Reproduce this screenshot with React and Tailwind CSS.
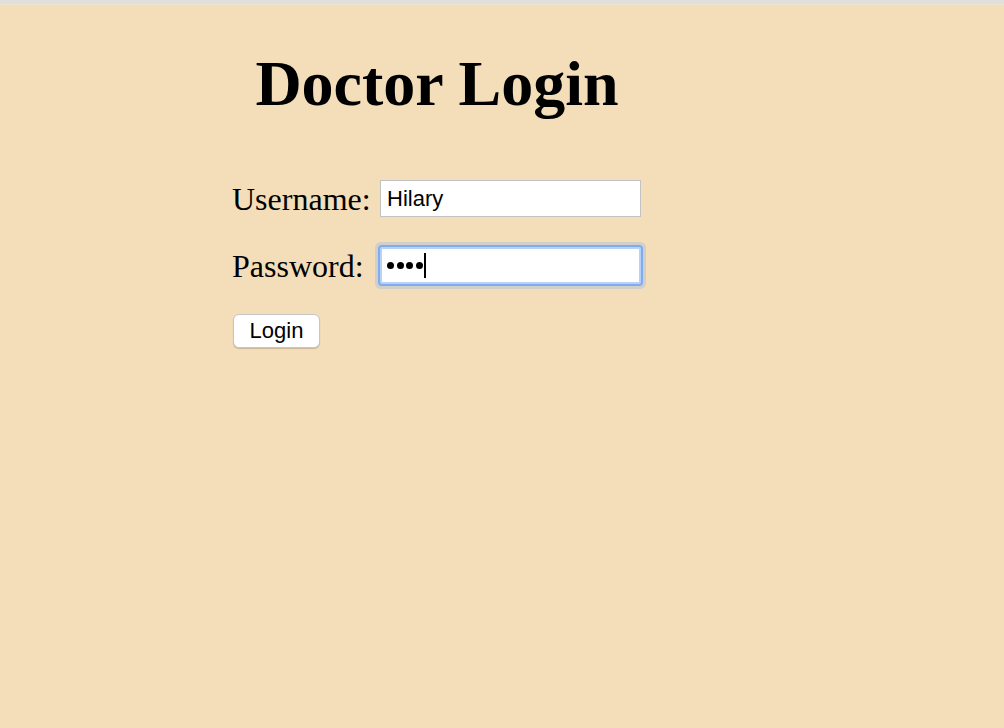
export default function App() {
  return (
    <div className="min-h-screen bg-[#f3deb9] font-['Liberation_Serif',serif] text-black">
      {/* browser chrome edge */}
      <div className="h-[4px] bg-[#e1dfdc]" />
      <div className="h-[1px] bg-[#ece3d2]" />

      <div className="ml-[232px] w-[410px] pt-[47px]">
        <h1 className="text-center text-[64px] font-bold leading-none">Doctor Login</h1>

        <form className="mt-[64px]" onSubmit={(e) => e.preventDefault()}>
          <div className="grid grid-cols-[148px_261px] items-center gap-y-[30px]">
            <label className="text-[32px] leading-none">Username:</label>
            <input
              type="text"
              defaultValue="Hilary"
              className="h-[37px] w-[261px] border border-[#c3c3c3] bg-white px-[6px] font-['Liberation_Sans',Arial,sans-serif] text-[22px] text-black outline-none"
            />

            <label className="text-[32px] leading-none">Password:</label>
            <div className="flex h-[37px] w-[261px] items-center rounded-[2px] border-2 border-[#b7d2f7] bg-white pl-[5px] shadow-[0_0_0_2px_#80abee,0_0_0_5px_rgba(128,171,238,0.3)]">
              <div className="flex items-center gap-[2.6px]">
                <span className="h-[7px] w-[7px] rounded-full bg-black" />
                <span className="h-[7px] w-[7px] rounded-full bg-black" />
                <span className="h-[7px] w-[7px] rounded-full bg-black" />
                <span className="h-[7px] w-[7px] rounded-full bg-black" />
              </div>
              <span className="ml-[1px] h-[25px] w-[2px] bg-black" />
            </div>
          </div>

          <button
            type="submit"
            className="mt-[30px] ml-[1px] h-[34px] w-[87px] rounded-[6px] border border-[#c6c6c6] bg-white font-['Liberation_Sans',Arial,sans-serif] text-[22px] leading-none text-black shadow-[0_1px_1px_rgba(0,0,0,0.18)]"
          >
            Login
          </button>
        </form>
      </div>
    </div>
  );
}
